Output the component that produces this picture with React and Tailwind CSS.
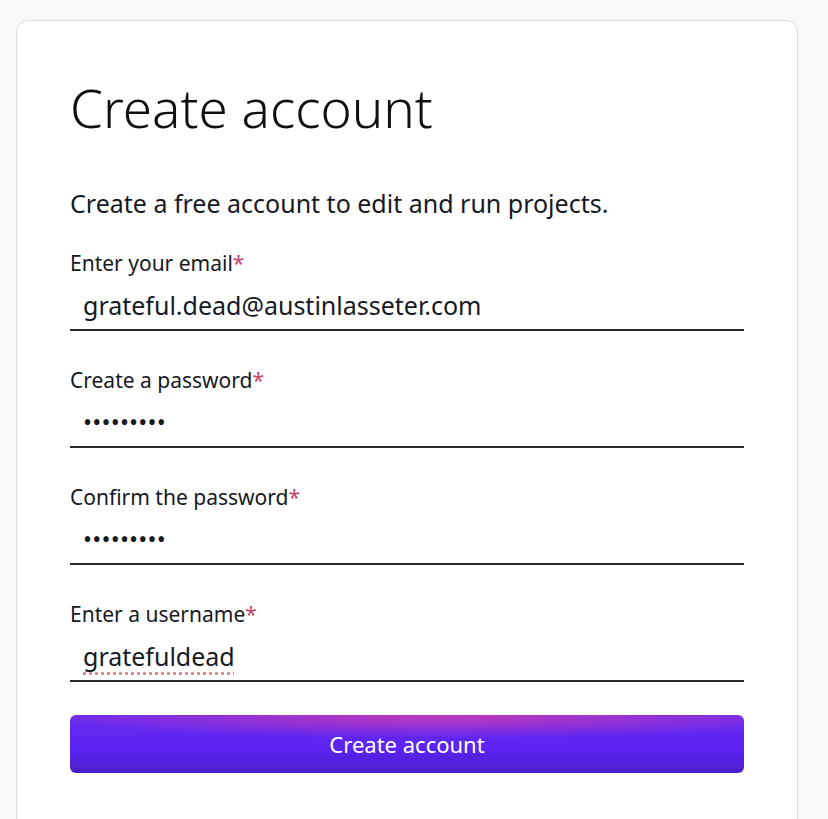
const fields = [
  { label: "Enter your email", value: "grateful.dead@austinlasseter.com" },
  { label: "Create a password", value: "•••••••••", secret: true },
  { label: "Confirm the password", value: "•••••••••", secret: true },
  { label: "Enter a username", value: "gratefuldead", spell: true },
];

function Field({ label, value, secret, spell }) {
  return (
    <div className="flex flex-col">
      <label className="text-[21px] leading-[28px] text-[#16191f]">
        {label}
        <span className="text-[#c7436b]">*</span>
      </label>
      <div className="mt-[8px] h-[46px] border-b-2 border-[#2a2a2a] px-[13px] pb-[4px] flex items-center">
        {secret ? (
          <span className="text-[24px] leading-[32px] tracking-[0.2px] text-[#16191f]">{value}</span>
        ) : (
          <span
            className={
              "text-[25px] leading-[32px] text-[#16191f] " +
              (spell ? "underline decoration-dotted decoration-[#e0787a] underline-offset-[6px]" : "")
            }
          >
            {value}
          </span>
        )}
      </div>
    </div>
  );
}

export default function App() {
  return (
    <div className="h-[819px] overflow-hidden bg-[#f8f8fb] px-[16px] pt-[20px] font-['Noto_Sans',sans-serif]">
      <div className="w-[782px] h-[840px] rounded-[12px] border border-[#dcdce0] bg-white px-[53px] pt-[55px]">
        <h1 className="text-[53px] leading-[64px] font-light text-[#0f1111]">Create account</h1>
        <p className="mt-[48px] text-[25px] leading-[30px] text-[#16191f]">
          Create a free account to edit and run projects.
        </p>
        <div className="mt-[31px] flex flex-col gap-[35px]">
          {fields.map((f) => (
            <Field key={f.label} {...f} />
          ))}
        </div>
        <button className="mt-[33px] h-[58px] w-full rounded-[6px] text-[22px] text-white bg-[radial-gradient(ellipse_60%_40%_at_55%_0%,#c23ab8_0%,rgba(194,58,184,0)_100%),linear-gradient(to_bottom,#6a2cf0,#5a22f2_60%,#4a1fc8)]">
          Create account
        </button>
      </div>
    </div>
  );
}
